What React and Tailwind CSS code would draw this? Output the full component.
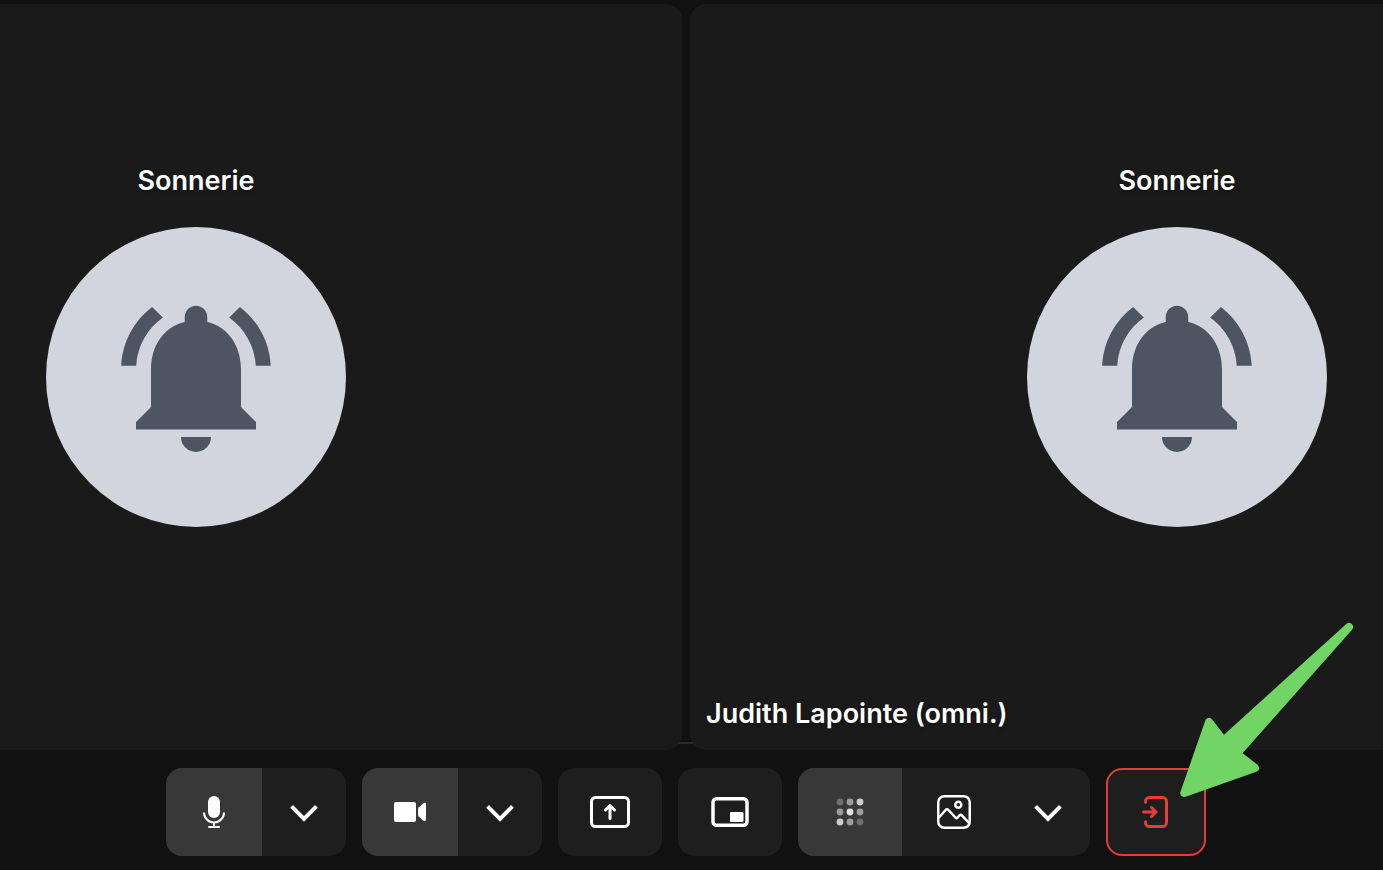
import React, { useState } from 'react'
import clsx from 'clsx'

// ============ ICONS ============

const BellIcon = () => (
  <svg width="180" height="180" viewBox="0 0 24 24" fill="currentColor" aria-hidden="true">
    <path d="M7.58 4.08L6.15 2.65C3.75 4.48 2.17 7.3 2.03 10.5h2c.15-2.65 1.51-4.97 3.55-6.42zM19.97 10.5h2c-.15-3.2-1.73-6.02-4.12-7.85l-1.42 1.43c2.02 1.45 3.39 3.77 3.54 6.42zM18 11c0-3.07-1.64-5.64-4.5-6.32V4c0-.83-.67-1.5-1.5-1.5s-1.5.67-1.5 1.5v.68C7.63 5.36 6 7.92 6 11v5l-2 2v1h16v-1l-2-2v-5zM10 20h4a2 2 0 0 1-4 0z" />
  </svg>
)

const MicIcon = () => (
  <svg width="22" height="32" viewBox="0 0 22 32" fill="none" stroke="currentColor" strokeWidth="2" aria-hidden="true">
    <rect x="5" y="0" width="12" height="22" rx="6" fill="currentColor" stroke="none" />
    <path d="M1 16.5a10 10 0 0 0 20 0M11 26v5" />
    <path d="M6 31h10" strokeLinecap="round" />
  </svg>
)

const CameraIcon = () => (
  <svg width="32" height="20" viewBox="0 0 32 20" fill="currentColor" aria-hidden="true">
    <rect x="0" y="0" width="22" height="20" rx="2" />
    <path d="M24 7.2c0-.8.3-1.4.9-2L29.5 1.2c.9-.7 2.5-.4 2.5.8v16c0 1.2-1.6 1.5-2.5.8l-4.6-4c-.6-.6-.9-1.2-.9-2z" />
  </svg>
)

const ChevronIcon = () => (
  <svg width="28" height="28" viewBox="0 0 28 28" fill="none" stroke="currentColor" strokeWidth="4" aria-hidden="true">
    <path d="M1.6 8.4 14 20.9 26.4 8.4" />
  </svg>
)

const ShareIcon = () => (
  <svg width="40" height="32" viewBox="0 0 40 32" fill="none" stroke="currentColor" strokeWidth="3" strokeLinecap="round" strokeLinejoin="round" aria-hidden="true">
    <rect x="1.5" y="1.5" width="37" height="29" rx="4" />
    <path d="M20 22.5V9.5M15.5 14 20 9.5l4.5 4.5" />
  </svg>
)

const PipIcon = () => (
  <svg width="38" height="30" viewBox="0 0 38 30" fill="none" stroke="currentColor" strokeWidth="3.5" aria-hidden="true">
    <rect x="2" y="1.75" width="34" height="26.5" rx="3.5" />
    <rect x="19" y="15" width="13.5" height="10" rx="1" fill="currentColor" stroke="none" />
  </svg>
)

const BLUR_DOTS = [
  [0.28, 0.5, 0.75],
  [0.5, 0.85, 0.5],
  [0.75, 0.5, 0.28]
]

const BlurIcon = () => (
  <svg width="28" height="28" viewBox="0 0 28 28" fill="currentColor" aria-hidden="true">
    {BLUR_DOTS.map((row, y) =>
      row.map((opacity, x) => (
        <circle key={`${x}-${y}`} cx={4 + x * 10} cy={4 + y * 10} r="3.4" opacity={opacity} />
      ))
    )}
  </svg>
)

const ImageIcon = () => (
  <svg width="34" height="34" viewBox="0 0 34 34" fill="none" stroke="currentColor" strokeWidth="2.5" strokeLinejoin="round" aria-hidden="true">
    <rect x="1.25" y="1.25" width="31.5" height="31.5" rx="6" />
    <circle cx="21.3" cy="9.7" r="3" />
    <path d="M2 22.5 8.6 15c.8-1 1.900-1 2.800 0l7 7.500c.8.8 1.500.8 2.300 0l1.600-1.900c.9-1 1.900-1 2.800 0L32 28" />
  </svg>
)

const ExitIcon = () => (
  <svg width="28" height="32" viewBox="0 0 28 32" fill="none" stroke="currentColor" strokeWidth="3" strokeLinecap="round" strokeLinejoin="round" aria-hidden="true">
    <path d="M3.500 6.300V5.500a4 4 0 0 1 4-4h13a4 4 0 0 1 4 4v21a4 4 0 0 1-4 4h-13a4 4 0 0 1-4-4V25.700" />
    <path d="M1.500 16H14M9.500 11.500l4.500 4.500-4.500 4.500" />
  </svg>
)

// ============ PARTICIPANTS ============

function Participant({ name, className }) {
  return (
    <section className={clsx('relative flex flex-col justify-center bg-[#1a1a1a] pb-16', className)}>
      <div className="flex flex-col items-center gap-7">
        <p className="text-[27px] leading-9 font-semibold text-shadow-md">Sonnerie</p>
        <div className="flex size-[300px] items-center justify-center rounded-full bg-[#d2d5de] text-[#4e5562]">
          <BellIcon />
        </div>
      </div>
      {name && (
        <p className="absolute bottom-[18px] left-4 text-[27px] leading-9 font-semibold whitespace-nowrap text-shadow-md">
          {name}
        </p>
      )}
    </section>
  )
}

// ============ TOOLBAR ============

function ToolGroup({ children }) {
  return <div className="flex h-[88px] shrink-0 overflow-hidden rounded-2xl bg-[#1e1e1e]">{children}</div>
}

function ToolButton({ label, className = 'w-[104px]', pressed, onClick, children }) {
  return (
    <button
      type="button"
      aria-label={label}
      aria-pressed={pressed}
      onClick={onClick}
      className={clsx('flex items-center justify-center', className, pressed && 'bg-[#383838]')}
    >
      {children}
    </button>
  )
}

export default function App() {
  const [active, setActive] = useState({ mic: true, camera: true, blur: true })

  const toggle = (key) => setActive((prev) => ({ ...prev, [key]: !prev[key] }))

  return (
    <div className="flex min-h-screen flex-col overflow-hidden bg-[#111111] font-['Inter',sans-serif] text-white">
      <main className="relative grid flex-1 grid-cols-[682fr_693fr] gap-2 pt-1">
        <div className="absolute inset-x-0 bottom-1.5 h-0.5 bg-[#2a2a2a]" />
        <Participant className="items-start rounded-r-2xl pl-[46px]" />
        <Participant className="items-end rounded-l-2xl pr-14" name="Judith Lapointe (omni.)" />
      </main>

      <footer className="flex justify-center gap-4 pt-[18px] pr-[11px] pb-3.5">
        <ToolGroup>
          <ToolButton label="Micro" className="w-24" pressed={active.mic} onClick={() => toggle('mic')}>
            <MicIcon />
          </ToolButton>
          <ToolButton label="Options du micro" className="w-[84px]">
            <ChevronIcon />
          </ToolButton>
        </ToolGroup>

        <ToolGroup>
          <ToolButton label="Caméra" className="w-24" pressed={active.camera} onClick={() => toggle('camera')}>
            <CameraIcon />
          </ToolButton>
          <ToolButton label="Options de la caméra" className="w-[84px]">
            <ChevronIcon />
          </ToolButton>
        </ToolGroup>

        <ToolGroup>
          <ToolButton label="Partager l'écran">
            <ShareIcon />
          </ToolButton>
        </ToolGroup>

        <ToolGroup>
          <ToolButton label="Image dans l'image">
            <PipIcon />
          </ToolButton>
        </ToolGroup>

        <ToolGroup>
          <ToolButton label="Flou" pressed={active.blur} onClick={() => toggle('blur')}>
            <BlurIcon />
          </ToolButton>
          <ToolButton label="Arrière-plan">
            <ImageIcon />
          </ToolButton>
          <ToolButton label="Options d'arrière-plan" className="w-[84px]">
            <ChevronIcon />
          </ToolButton>
        </ToolGroup>

        <div className="relative">
          <button
            type="button"
            aria-label="Quitter"
            className="flex h-[88px] w-[100px] items-center justify-center rounded-2xl border-2 border-[#e63c3c] bg-[#1e1e1e] text-[#e63c3c]"
          >
            <ExitIcon />
          </button>
          {/* pointer towards the exit button */}
          <svg
            width="173"
            height="176"
            viewBox="0 0 173 176"
            className="pointer-events-none absolute bottom-[58px] left-[74px] max-w-none"
            aria-hidden="true"
          >
            <path
              d="M169 5 43.4 118.6 29 100 4.3 171 75 146 56.8 131.6Z"
              fill="#71d566"
              stroke="#71d566"
              strokeWidth="8"
              strokeLinejoin="round"
            />
          </svg>
        </div>
      </footer>
    </div>
  )
}
